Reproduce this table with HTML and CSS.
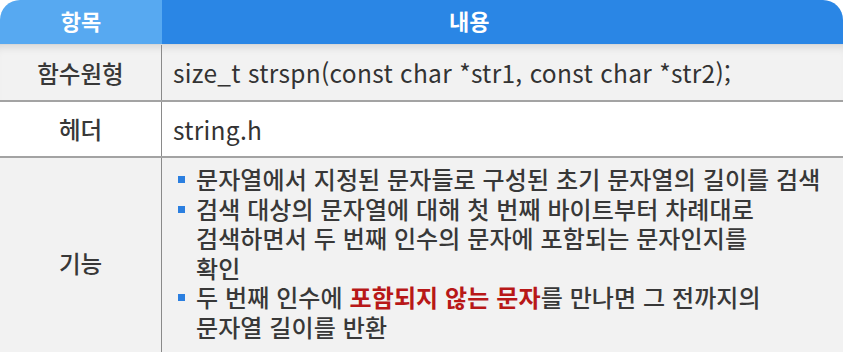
FILE: index.html
```html
<!DOCTYPE html>
<html lang="ko">
<head>
<meta charset="utf-8">
<link rel="stylesheet" href="styles.css">
</head>
<body>
<div class="table">
  <div class="row head">
    <div class="c1">항목</div>
    <div class="c2 head-title">내용</div>
  </div>
  <div class="row gray first">
    <div class="c1">함수원형</div>
    <div class="c2 code">size_t strspn(const char *str1, const char *str2);</div>
    <svg class="mark" width="80" height="20" viewBox="0 0 80 20"><path d="M2 3 C 10 10, 28 14, 46 12" fill="none" stroke="#d42020" stroke-width="1.2" stroke-linecap="round"/><path d="M58 4 L 62 1" fill="none" stroke="#d42020" stroke-width="1" stroke-linecap="round"/></svg>
  </div>
  <div class="row white">
    <div class="c1">헤더</div>
    <div class="c2 code">string.h</div>
  </div>
  <div class="row gray last">
    <div class="c1">기능</div>
    <div class="c2">
      <ul class="list">
        <li>문자열에서 지정된 문자들로 구성된 초기 문자열의 길이를 검색</li>
        <li>검색 대상의 문자열에 대해 첫 번째 바이트부터 차례대로<br>검색하면서 두 번째 인수의 문자에 포함되는 문자인지를<br>확인</li>
        <li>두 번째 인수에 <b class="red">포함되지 않는 문자</b>를 만나면 그 전까지의<br>문자열 길이를 반환</li>
      </ul>
    </div>
  </div>
</div>
</body>
</html>
```

FILE: styles.css
```css
* { box-sizing: border-box; }
html, body { margin: 0; padding: 0; background: #fff; }
body {
  font-family: "Noto Sans CJK KR", "Noto Sans", sans-serif;
  color: #383838;
  overflow: hidden;
}
.table {
  width: 843px;
}
.row {
  display: flex;
  position: relative;
}
.c1 {
  width: 162px;
  flex: none;
  display: flex;
  align-items: center;
  justify-content: center;
  font-size: 23.5px;
  font-weight: 500;
  border-right: 1px solid #8a8a8a;
}
.c2 {
  flex: 1;
  display: flex;
  align-items: center;
  padding-left: 11px;
  font-size: 24px;
  font-weight: 500;
}
.code {
  font-size: 24.5px;
  font-weight: 400;
  color: #333;
  letter-spacing: 0.3px;
}
.head {
  height: 45px;
  border-radius: 20px 20px 0 0;
  overflow: hidden;
  border-bottom: 1px solid #d8d8d8;
}
.head .c1 {
  background: #57a9f1;
  color: #fff;
  font-weight: 700;
  font-size: 22px;
  border-right: none;
  padding-bottom: 4px;
}
.head .c2 {
  background: #2a86e5;
  color: #fff;
  font-weight: 700;
  font-size: 22px;
  padding-left: 287px;
  padding-bottom: 4px;
}
.gray { background: #f2f2f2; }
.white { background: #fff; }
.first {
  height: 57px;
  border-bottom: 2px solid #a3a3a3;
  box-shadow: inset 0 8px 8px -6px rgba(0,0,0,0.12);
}
.row.white {
  height: 56px;
  border-bottom: 2px solid #a3a3a3;
}
.last {
  height: 210px;
}
.last .c2 {
  align-items: flex-start;
  padding-top: 6px;
  padding-left: 0;
}
.list {
  list-style: none;
  margin: 0;
  padding: 0 0 0 34px;
  line-height: 29.5px;
  letter-spacing: 0.1px;
}
.list li {
  position: relative;
}
.list li::before {
  content: "";
  position: absolute;
  left: -18px;
  top: 12px;
  width: 7px;
  height: 7px;
  background: #2b7fe0;
}
.red { color: #b81818; font-weight: 700; }
.mark {
  position: absolute;
  left: 257px;
  top: 96px;
}
```
